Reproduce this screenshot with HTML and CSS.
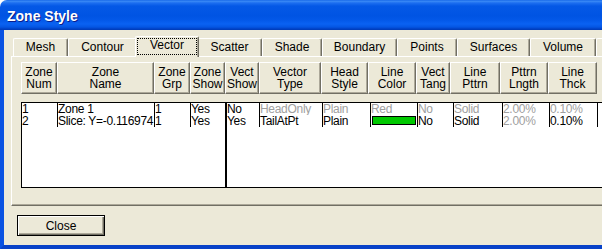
FILE: index.html
```html
<!DOCTYPE html>
<html lang="en">
<head>
    <meta charset="UTF-8">
    <title>Zone Style</title>
    <link rel="stylesheet" href="styles.css">
</head>
<body>
    <div class="window">
        <div class="titlebar">Zone Style</div>
        <div class="client">
            <div class="tabs">
                <div class="tab">Mesh</div>
                <div class="tab">Contour</div>
                <div class="tab active">Vector</div>
                <div class="tab">Scatter</div>
                <div class="tab">Shade</div>
                <div class="tab">Boundary</div>
                <div class="tab">Points</div>
                <div class="tab">Surfaces</div>
                <div class="tab">Volume</div>
                <div class="tab"></div>
            </div>

            <div class="panel">
                <div class="grid-header">
                    <div class="hcell">Zone<br>Num</div>
                    <div class="hcell">Zone<br>Name</div>
                    <div class="hcell">Zone<br>Grp</div>
                    <div class="hcell">Zone<br>Show</div>
                    <div class="hcell">Vect<br>Show</div>
                    <div class="hcell">Vector<br>Type</div>
                    <div class="hcell">Head<br>Style</div>
                    <div class="hcell">Line<br>Color</div>
                    <div class="hcell">Vect<br>Tang</div>
                    <div class="hcell">Line<br>Pttrn</div>
                    <div class="hcell">Pttrn<br>Lngth</div>
                    <div class="hcell">Line<br>Thck</div>
                </div>

                <div class="grid-body">
                    <!-- frozen columns -->
                    <div class="pane pane-fixed">
                        <div class="row">
                            <div class="cell">1</div>
                            <div class="cell">Zone 1</div>
                            <div class="cell">1</div>
                            <div class="cell">Yes</div>
                        </div>
                        <div class="row">
                            <div class="cell">2</div>
                            <div class="cell">Slice: Y=-0.116974</div>
                            <div class="cell">1</div>
                            <div class="cell">Yes</div>
                        </div>
                    </div>
                    <!-- vector columns -->
                    <div class="pane pane-scroll">
                        <div class="row">
                            <div class="cell">No</div>
                            <div class="cell off">HeadOnly</div>
                            <div class="cell off">Plain</div>
                            <div class="cell off">Red</div>
                            <div class="cell off">No</div>
                            <div class="cell off">Solid</div>
                            <div class="cell off">2.00%</div>
                            <div class="cell off">0.10%</div>
                            <div class="cell"></div>
                        </div>
                        <div class="row">
                            <div class="cell">Yes</div>
                            <div class="cell">TailAtPt</div>
                            <div class="cell">Plain</div>
                            <div class="cell"><div class="swatch"></div></div>
                            <div class="cell">No</div>
                            <div class="cell">Solid</div>
                            <div class="cell off">2.00%</div>
                            <div class="cell">0.10%</div>
                            <div class="cell"></div>
                        </div>
                    </div>
                </div>
            </div>

            <div class="footer">
                <button class="btn btn-default">Close</button>
            </div>
        </div>
    </div>
</body>
</html>
```

FILE: styles.css
```css
:root {
    --face: #ECE9D8;      /* dialog face */
    --shadow: #ACA899;    /* button shadow */
    --dark: #716F64;      /* dark shadow */
    --muted: #A0A0A0;     /* disabled text */
}

* {
    margin: 0;
    padding: 0;
    box-sizing: border-box;
}

body {
    background: #ffffff;
    overflow: hidden;
    font-family: "Liberation Sans", Arial, sans-serif;
    font-size: 12px;
    color: #000;
}

.window {
    width: 640px;
    height: 249px;
    display: flex;
    flex-direction: column;
}

/* XP style caption */
.titlebar {
    height: 30px;
    padding: 2px 0 0 7px;
    line-height: 28px;
    font-size: 14px;
    font-weight: bold;
    color: #fff;
    text-shadow: 1px 1px #0A1E8C;
    border-radius: 7px 7px 0 0;
    background: linear-gradient(to bottom,
        #0A5BE4 0px, #3D8DF6 1px, #1C6EF0 3px, #0458E6 6px,
        #0054E3 16px, #0358E8 20px, #0A62F2 24px, #0456E3 27px,
        #0040C4 29px, #003BB4 30px);
}

.client {
    flex: 1;
    background: var(--face);
    border-left: 4px solid #0A52E2;
    border-bottom: 4px solid #0842C8;
    padding: 6px 0 0 7px;
}

/* Tabs */
.tabs {
    display: grid;
    grid-template-columns: 55px 69px 60px 65px 60px 75px 60px 73px 66px 70px;
    align-items: end;
    height: 20px;
    padding-left: 2px;
}

.tab {
    height: 18px;
    line-height: 16px;
    text-align: center;
    white-space: nowrap;
    border-top: 1px solid #fff;
    border-left: 1px solid #fff;
    border-right: 1px solid var(--dark);
    box-shadow: inset -1px 0 var(--shadow);
    border-radius: 2px 2px 0 0;
}

.tab.active {
    height: 21px;
    margin: 0 -2px -1px;
    position: relative;
    z-index: 1;
    background: var(--face);
    outline: 1px dotted #000;
    outline-offset: -3px;
}

.panel {
    height: 150px;
    padding: 5px 0 0 9px;
    border-top: 1px solid #fff;
    border-left: 1px solid #fff;
    border-bottom: 1px solid var(--dark);
    box-shadow: inset 0 -1px var(--shadow);
}

/* Grid header buttons */
.grid-header {
    display: grid;
    grid-template-columns: 36px 97px 36px 35px 34px 62px 47px 48px 34px 50px 48px 49px;
    height: 32px;
}

.hcell {
    padding-top: 3px;
    line-height: 12px;
    text-align: center;
    white-space: nowrap;
    border: 1px solid;
    border-color: #fff var(--dark) var(--dark) #fff;
    box-shadow: inset -1px -1px var(--shadow);
}

/* Grid body */
.grid-body {
    display: flex;
    height: 86px;
    margin-top: 8px;
    background: #fff;
    border: 1px solid #000;
}

.pane-fixed {
    width: 205px;
    border-right: 2px solid #000;
}

.pane-scroll {
    flex: 1;
}

.row {
    display: grid;
    height: 12px;
    line-height: 12px;
    white-space: nowrap;
}

.pane-fixed .row {
    grid-template-columns: 35px 97px 36px 35px;
}

.pane-scroll .row {
    grid-template-columns: 32px 63px 48px 47px 36px 49px 47px 48px 1fr;
}

.cell {
    overflow: hidden;
    letter-spacing: -0.3px;
}

.cell + .cell {
    border-left: 1px solid #000;
}

.cell.off {
    color: var(--muted);
}

.swatch {
    width: 44px;
    height: 9px;
    margin: 1px 0 0 1px;
    border: 1px solid #000;
    background: #00C800;
}

/* Footer */
.footer {
    padding: 9px 0 0 6px;
}

.btn {
    width: 88px;
    height: 21px;
    font-family: inherit;
    font-size: 12px;
    color: #000;
    background: var(--face);
    border: 1px solid var(--dark);
    box-shadow: inset 1px 1px #fff, inset -1px -1px var(--shadow);
}

.btn-default {
    border-color: #000;
    box-shadow: inset 1px 1px #fff, inset -1px -1px var(--dark), inset -2px -2px var(--shadow);
}
```
